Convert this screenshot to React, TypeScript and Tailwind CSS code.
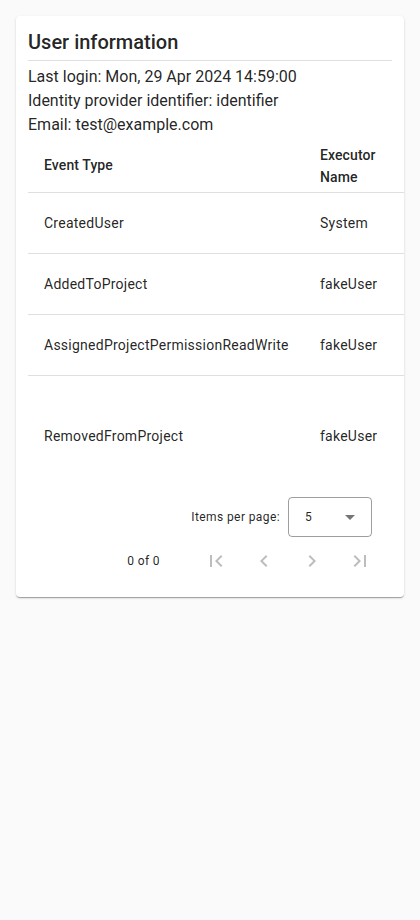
import React from "react";

const rows = [
  { type: "CreatedUser", exec: "System", h: "h-[61px] border-b" },
  { type: "AddedToProject", exec: "fakeUser", h: "h-[61px] border-b" },
  { type: "AssignedProjectPermissionReadWrite", exec: "fakeUser", h: "h-[61px] border-b" },
  { type: "RemovedFromProject", exec: "fakeUser", h: "h-[120px]" },
];

function Icon({ d }: { d: string }) {
  return (
    <div className="w-12 h-12 flex items-center justify-center">
      <svg width="24" height="24" viewBox="0 0 24 24" fill="rgba(0,0,0,0.26)">
        <path d={d} />
      </svg>
    </div>
  );
}

export default function App() {
  return (
    <div
      className="min-h-screen bg-[#fafafa] p-4 text-[rgba(0,0,0,0.87)]"
      style={{ fontFamily: "Roboto, 'Noto Sans', sans-serif" }}
    >
      <div className="bg-white rounded overflow-hidden shadow-[0_2px_1px_-1px_rgba(0,0,0,0.2),0_1px_1px_0_rgba(0,0,0,0.14),0_1px_3px_0_rgba(0,0,0,0.12)] px-3 pt-[10px] pb-[13px]">
        <div className="text-[20px] font-medium leading-[32px] pb-[2px] border-b border-[#e0e0e0]">
          User information
        </div>
        <div className="mt-[4px] text-[16px] leading-[24px]">
          <div>Last login: Mon, 29 Apr 2024 14:59:00</div>
          <div>Identity provider identifier: identifier</div>
          <div>Email: test@example.com</div>
        </div>
        <div className="-mr-3 overflow-hidden text-[14px] tracking-[0.25px]">
          <div className="flex h-[56px] pt-[2px] border-b border-[#e0e0e0] items-center font-medium tracking-[0.1px]">
            <div className="w-[292px] shrink-0 pl-4">Event Type</div>
            <div className="w-[84px] shrink-0 leading-[22px]">Executor Name</div>
          </div>
          {rows.map((r) => (
            <div key={r.type} className={`flex items-center border-[#e0e0e0] ${r.h}`}>
              <div className="w-[292px] shrink-0 pl-4">{r.type}</div>
              <div className="w-[84px] shrink-0">{r.exec}</div>
            </div>
          ))}
        </div>
        <div className="text-[12px] tracking-[0.4px]">
          <div className="flex h-[42px] items-center justify-end pr-5">
            <span className="mr-2">Items per page:</span>
            <div className="w-[84px] h-[40px] border border-[rgba(0,0,0,0.38)] rounded flex items-center pl-4 pr-4 justify-between text-[12px]">
              <span>5</span>
              <svg width="10" height="5" viewBox="0 0 10 5">
                <path d="M0 0l5 5 5-5z" fill="rgba(0,0,0,0.54)" />
              </svg>
            </div>
          </div>
          <div className="flex h-[46px] items-center justify-end pr-2">
            <span className="mr-8">0 of 0</span>
            <Icon d="M18.41 16.59L13.82 12l4.59-4.59L17 6l-6 6 6 6zM6 6h2v12H6z" />
            <Icon d="M15.41 7.41L14 6l-6 6 6 6 1.41-1.41L10.83 12z" />
            <Icon d="M10 6L8.59 7.41 13.17 12l-4.58 4.59L10 18l6-6z" />
            <Icon d="M5.59 7.41L10.18 12l-4.59 4.59L7 18l6-6-6-6zM16 6h2v12h-2z" />
          </div>
        </div>
      </div>
    </div>
  );
}
